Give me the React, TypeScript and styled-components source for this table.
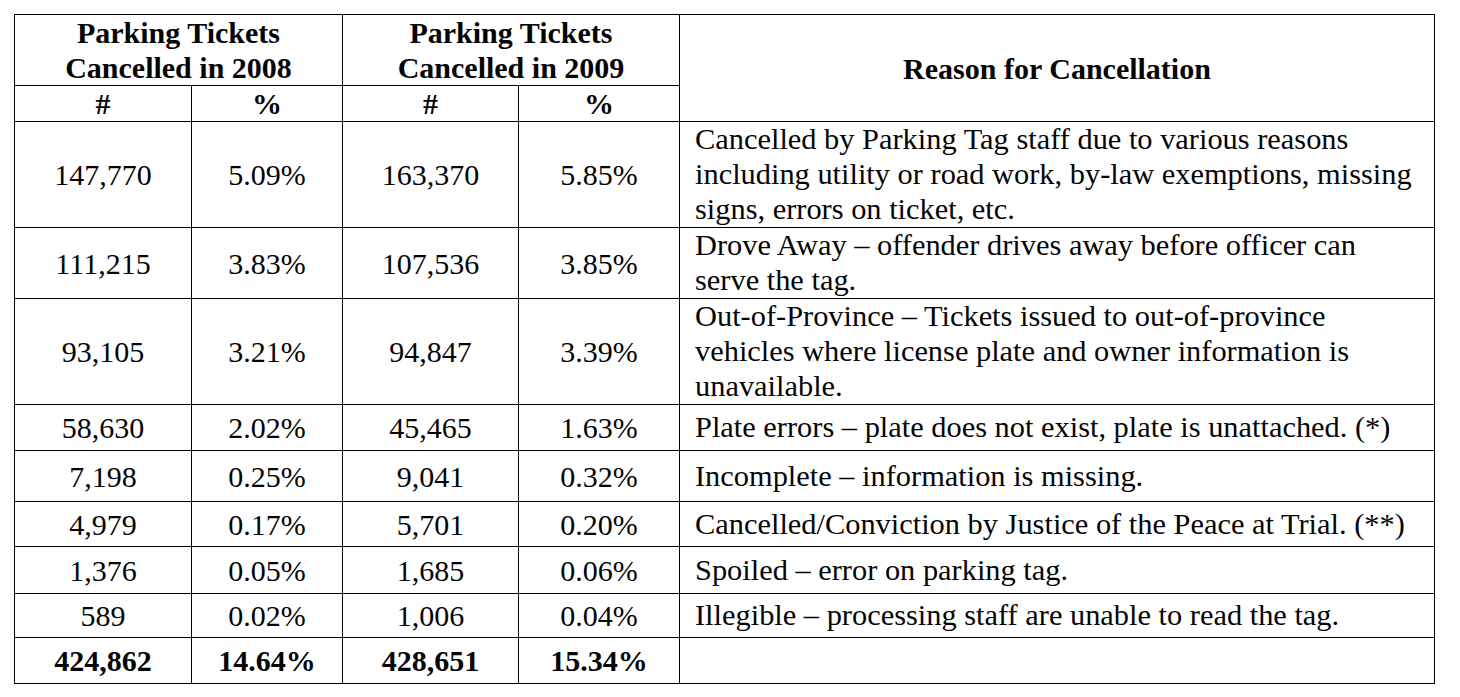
import React from "react";
import styled, { createGlobalStyle } from "styled-components";

const GlobalStyle = createGlobalStyle`
  html, body {
    margin: 0;
    padding: 0;
    background: #ffffff;
  }
  body {
    font-family: "Liberation Serif", "Times New Roman", serif;
    color: #000000;
  }
`;

const Page = styled.div`
  padding: 14px 0 0 14px;
`;

const Grid = styled.div<{ $rows: string }>`
  display: grid;
  grid-template-columns: 176px 150px 175px 160px 754px;
  grid-template-rows: ${(p) => p.$rows};
  gap: 1px;
  padding: 1px;
  background: #000000;
  width: max-content;
  font-family: "Liberation Serif", "Times New Roman", serif;
  font-size: 30px;
  line-height: 35px;
  color: #050505;
`;

const Cell = styled.div<{ $bold?: boolean; $span?: number; $rowSpan?: number }>`
  background: #ffffff;
  display: flex;
  flex-direction: column;
  align-items: center;
  justify-content: center;
  text-align: center;
  font-weight: ${(p) => (p.$bold ? 700 : 400)};
  grid-column: span ${(p) => p.$span ?? 1};
  grid-row: span ${(p) => p.$rowSpan ?? 1};
  white-space: nowrap;
`;

const ReasonCell = styled.div`
  background: #ffffff;
  display: flex;
  flex-direction: column;
  justify-content: center;
  align-items: flex-start;
  padding-left: 15px;
  font-size: 30.4px;
  white-space: nowrap;
`;

type Row = {
  n08: string;
  p08: string;
  n09: string;
  p09: string;
  reason: string[];
  h: number;
  bold?: boolean;
};

const rows: Row[] = [
  {
    n08: "147,770",
    p08: "5.09%",
    n09: "163,370",
    p09: "5.85%",
    reason: [
      "Cancelled by Parking Tag staff due to various reasons",
      "including utility or road work, by-law exemptions, missing",
      "signs, errors on ticket, etc.",
    ],
    h: 105,
  },
  {
    n08: "111,215",
    p08: "3.83%",
    n09: "107,536",
    p09: "3.85%",
    reason: ["Drove Away – offender drives away before officer can", "serve the tag."],
    h: 70,
  },
  {
    n08: "93,105",
    p08: "3.21%",
    n09: "94,847",
    p09: "3.39%",
    reason: [
      "Out-of-Province – Tickets issued to out-of-province",
      "vehicles where license plate and owner information is",
      "unavailable.",
    ],
    h: 105,
  },
  {
    n08: "58,630",
    p08: "2.02%",
    n09: "45,465",
    p09: "1.63%",
    reason: ["Plate errors – plate does not exist, plate is unattached. (*)"],
    h: 45,
  },
  {
    n08: "7,198",
    p08: "0.25%",
    n09: "9,041",
    p09: "0.32%",
    reason: ["Incomplete – information is missing."],
    h: 50,
  },
  {
    n08: "4,979",
    p08: "0.17%",
    n09: "5,701",
    p09: "0.20%",
    reason: ["Cancelled/Conviction by Justice of the Peace at Trial. (**)"],
    h: 44,
  },
  {
    n08: "1,376",
    p08: "0.05%",
    n09: "1,685",
    p09: "0.06%",
    reason: ["Spoiled – error on parking tag."],
    h: 46,
  },
  {
    n08: "589",
    p08: "0.02%",
    n09: "1,006",
    p09: "0.04%",
    reason: ["Illegible – processing staff are unable to read the tag."],
    h: 43,
  },
  {
    n08: "424,862",
    p08: "14.64%",
    n09: "428,651",
    p09: "15.34%",
    reason: [],
    h: 45,
    bold: true,
  },
];

export default function App() {
  const rowTemplate = ["70px", "35px", ...rows.map((r) => `${r.h}px`)].join(" ");
  return (
    <Page>
      <GlobalStyle />
      <Grid $rows={rowTemplate}>
        <Cell $bold $span={2}>
          <span>Parking Tickets</span>
          <span>Cancelled in 2008</span>
        </Cell>
        <Cell $bold $span={2}>
          <span>Parking Tickets</span>
          <span>Cancelled in 2009</span>
        </Cell>
        <Cell $bold $rowSpan={2}>
          Reason for Cancellation
        </Cell>
        <Cell $bold>#</Cell>
        <Cell $bold>%</Cell>
        <Cell $bold>#</Cell>
        <Cell $bold>%</Cell>
        {rows.map((r, i) => (
          <React.Fragment key={i}>
            <Cell $bold={r.bold}>{r.n08}</Cell>
            <Cell $bold={r.bold}>{r.p08}</Cell>
            <Cell $bold={r.bold}>{r.n09}</Cell>
            <Cell $bold={r.bold}>{r.p09}</Cell>
            <ReasonCell>
              {r.reason.map((line, j) => (
                <span key={j}>{line}</span>
              ))}
            </ReasonCell>
          </React.Fragment>
        ))}
      </Grid>
    </Page>
  );
}
